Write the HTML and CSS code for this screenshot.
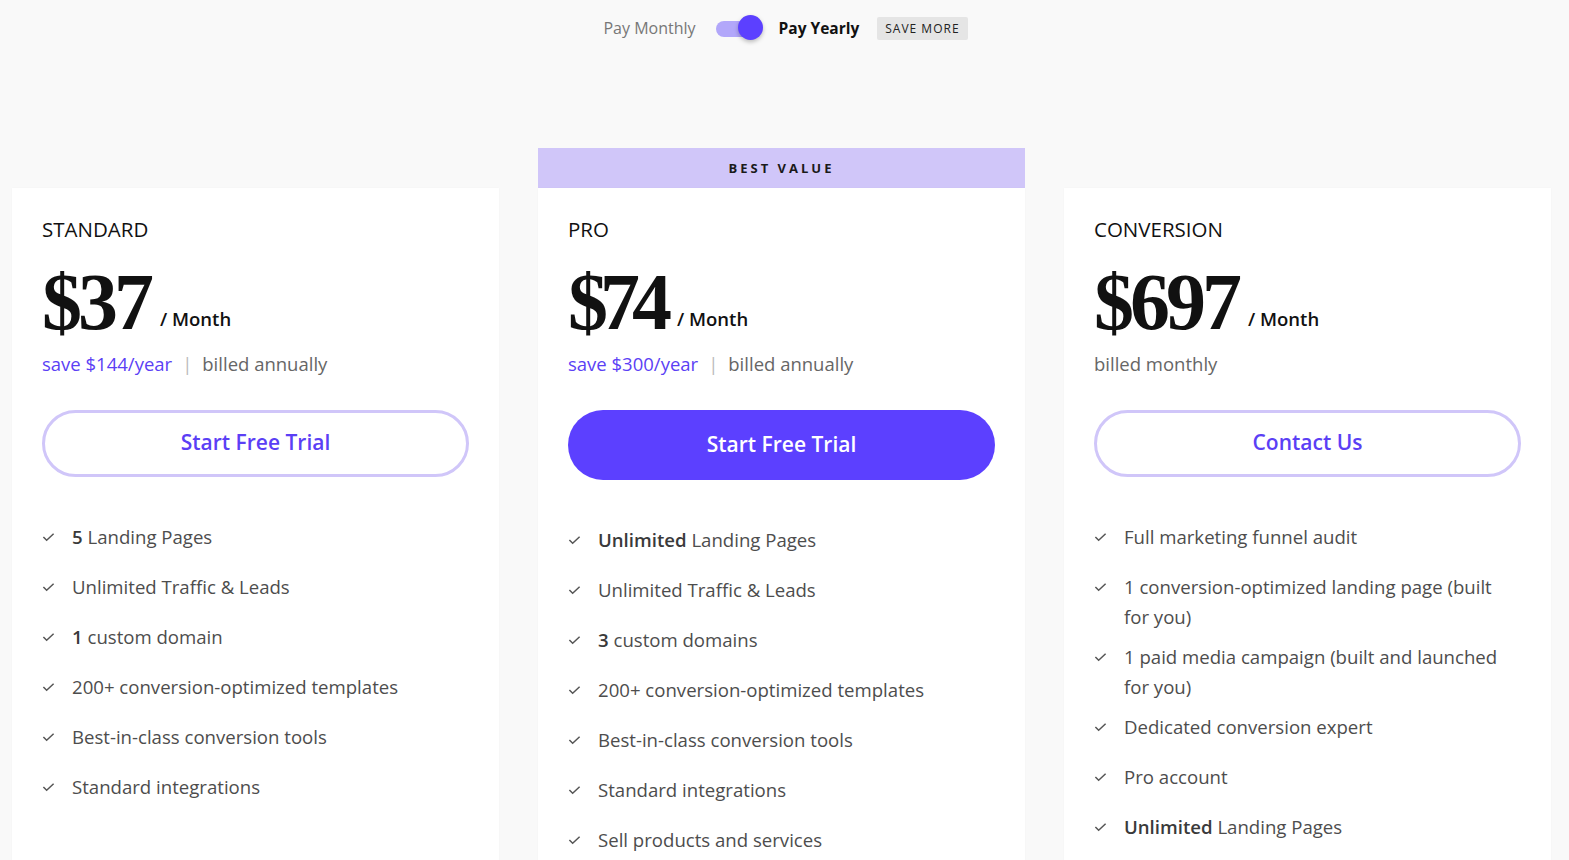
FILE: index.html
```html
<!DOCTYPE html>
<html lang="en">
<head>
<meta charset="utf-8">
<title>Pricing</title>
<link rel="stylesheet" href="styles.css">
</head>
<body>
<div class="billing">
  <span class="billing-opt">Pay Monthly</span>
  <span class="switch"><span class="switch-track"></span><span class="switch-knob"></span></span>
  <span class="billing-opt active">Pay Yearly</span>
  <span class="badge">SAVE MORE</span>
</div>

<div class="plans">
  <div class="plan">
    <div class="card">
      <h2 class="plan-name">STANDARD</h2>
      <div class="price-row"><span class="price">$37</span><span class="per">/ Month</span></div>
      <p class="billing-note"><span class="save">save $144/year</span><span class="sep">|</span><span>billed annually</span></p>
      <a class="btn btn-outline">Start Free Trial</a>
      <ul class="features">
        <li><svg class="check" viewBox="0 0 14 10"><path d="M1.5 5 L5 8.5 L12.5 1.5"/></svg><span><b>5</b> Landing Pages</span></li>
        <li><svg class="check" viewBox="0 0 14 10"><path d="M1.5 5 L5 8.5 L12.5 1.5"/></svg><span>Unlimited Traffic &amp; Leads</span></li>
        <li><svg class="check" viewBox="0 0 14 10"><path d="M1.5 5 L5 8.5 L12.5 1.5"/></svg><span><b>1</b> custom domain</span></li>
        <li><svg class="check" viewBox="0 0 14 10"><path d="M1.5 5 L5 8.5 L12.5 1.5"/></svg><span>200+ conversion-optimized templates</span></li>
        <li><svg class="check" viewBox="0 0 14 10"><path d="M1.5 5 L5 8.5 L12.5 1.5"/></svg><span>Best-in-class conversion tools</span></li>
        <li><svg class="check" viewBox="0 0 14 10"><path d="M1.5 5 L5 8.5 L12.5 1.5"/></svg><span>Standard integrations</span></li>
      </ul>
    </div>
  </div>

  <div class="plan featured">
    <div class="banner">BEST VALUE</div>
    <div class="card">
      <h2 class="plan-name">PRO</h2>
      <div class="price-row"><span class="price tight">$74</span><span class="per">/ Month</span></div>
      <p class="billing-note"><span class="save">save $300/year</span><span class="sep">|</span><span>billed annually</span></p>
      <a class="btn btn-solid">Start Free Trial</a>
      <ul class="features">
        <li><svg class="check" viewBox="0 0 14 10"><path d="M1.5 5 L5 8.5 L12.5 1.5"/></svg><span><b>Unlimited</b> Landing Pages</span></li>
        <li><svg class="check" viewBox="0 0 14 10"><path d="M1.5 5 L5 8.5 L12.5 1.5"/></svg><span>Unlimited Traffic &amp; Leads</span></li>
        <li><svg class="check" viewBox="0 0 14 10"><path d="M1.5 5 L5 8.5 L12.5 1.5"/></svg><span><b>3</b> custom domains</span></li>
        <li><svg class="check" viewBox="0 0 14 10"><path d="M1.5 5 L5 8.5 L12.5 1.5"/></svg><span>200+ conversion-optimized templates</span></li>
        <li><svg class="check" viewBox="0 0 14 10"><path d="M1.5 5 L5 8.5 L12.5 1.5"/></svg><span>Best-in-class conversion tools</span></li>
        <li><svg class="check" viewBox="0 0 14 10"><path d="M1.5 5 L5 8.5 L12.5 1.5"/></svg><span>Standard integrations</span></li>
        <li><svg class="check" viewBox="0 0 14 10"><path d="M1.5 5 L5 8.5 L12.5 1.5"/></svg><span>Sell products and services</span></li>
      </ul>
    </div>
  </div>

  <div class="plan">
    <div class="card">
      <h2 class="plan-name">CONVERSION</h2>
      <div class="price-row"><span class="price">$697</span><span class="per">/ Month</span></div>
      <p class="billing-note"><span>billed monthly</span></p>
      <a class="btn btn-outline">Contact Us</a>
      <ul class="features">
        <li><svg class="check" viewBox="0 0 14 10"><path d="M1.5 5 L5 8.5 L12.5 1.5"/></svg><span>Full marketing funnel audit</span></li>
        <li><svg class="check" viewBox="0 0 14 10"><path d="M1.5 5 L5 8.5 L12.5 1.5"/></svg><span>1 conversion-optimized landing page (built for you)</span></li>
        <li><svg class="check" viewBox="0 0 14 10"><path d="M1.5 5 L5 8.5 L12.5 1.5"/></svg><span>1 paid media campaign (built and launched for you)</span></li>
        <li><svg class="check" viewBox="0 0 14 10"><path d="M1.5 5 L5 8.5 L12.5 1.5"/></svg><span>Dedicated conversion expert</span></li>
        <li><svg class="check" viewBox="0 0 14 10"><path d="M1.5 5 L5 8.5 L12.5 1.5"/></svg><span>Pro account</span></li>
        <li><svg class="check" viewBox="0 0 14 10"><path d="M1.5 5 L5 8.5 L12.5 1.5"/></svg><span><b>Unlimited</b> Landing Pages</span></li>
      </ul>
    </div>
  </div>
</div>
</body>
</html>
```

FILE: styles.css
```css
* { box-sizing: border-box; }
html, body { margin: 0; padding: 0; }
body {
  background: #f9f9f9;
  font-family: "Open Sans", "Lato", sans-serif;
  color: #111;
  overflow: hidden;
}

.billing {
  display: flex;
  align-items: center;
  justify-content: center;
  height: 56px;
  padding-left: 2px;
}
.billing-opt {
  font-size: 16px;
  color: #777;
}
.billing-opt.active {
  color: #111;
  font-weight: 700;
  font-size: 15.5px;
}
.switch {
  position: relative;
  width: 47px;
  height: 26px;
  margin: 0 16px 0 20px;
}
.switch-track {
  position: absolute;
  left: 0;
  top: 6px;
  width: 43px;
  height: 16px;
  border-radius: 8px;
  background: #b2a7fa;
}
.switch-knob {
  position: absolute;
  right: 0;
  top: 0;
  width: 25px;
  height: 25px;
  border-radius: 50%;
  background: #5c40ff;
  box-shadow: 0 2px 4px rgba(0,0,0,0.25);
}
.badge {
  margin-left: 18px;
  background: #e5e5e5;
  color: #222;
  font-size: 12px;
  letter-spacing: 1px;
  padding: 4px 8px;
  border-radius: 2px;
  line-height: 15px;
}

.plans {
  display: grid;
  grid-template-columns: repeat(3, 487px);
  column-gap: 39px;
  padding: 0 12px;
  margin-top: 92px;
  align-items: start;
}
.plan { display: flex; flex-direction: column; }
.plan:not(.featured) { padding-top: 40px; }
.banner {
  height: 40px;
  background: #d0c6f9;
  color: #1a1a1a;
  font-size: 13px;
  font-weight: 700;
  letter-spacing: 3px;
  display: flex;
  align-items: center;
  justify-content: center;
}
.card {
  background: #fff;
  padding: 28px 30px 0 30px;
  min-height: 700px;
  box-shadow: 0 0 2px rgba(0,0,0,0.03);
}
.plan-name {
  margin: 0;
  font-size: 20.5px;
  font-weight: 500;
  line-height: 26px;
  color: #111;
}
.price-row {
  margin-top: 20px;
  height: 84px;
  line-height: 80px;
  white-space: nowrap;
}
.price {
  font-family: "Liberation Serif", "Times New Roman", serif;
  font-weight: 700;
  font-size: 80px;
  letter-spacing: -4px;
  color: #111;
}
.price.tight { letter-spacing: -8px; }
.per {
  font-size: 18.5px;
  font-weight: 600;
  margin-left: 10px;
  color: #111;
  vertical-align: 3px;
}
.price.tight + .per { margin-left: 13px; }
.billing-note {
  margin: 5px 0 0 0;
  font-size: 18.5px;
  line-height: 26px;
  color: #666;
  display: flex;
  align-items: center;
}
.save { color: #5b3ff5; font-weight: 500; }
.sep { color: #bbb; margin: 0 10px; }

.btn {
  display: flex;
  align-items: center;
  justify-content: center;
  margin-top: 33px;
  height: 67px;
  padding-bottom: 3px;
  border-radius: 34px;
  font-size: 21px;
  font-weight: 600;
  text-decoration: none;
}
.btn-outline {
  border: 3px solid #d0c6f9;
  color: #5b3ff5;
}
.btn-solid {
  height: 70px;
  background: #5c40ff;
  color: #fff;
  border-radius: 35px;
}

.features {
  list-style: none;
  margin: 45px 0 0 0;
  padding: 0;
}
.features li {
  display: flex;
  align-items: flex-start;
  min-height: 40px;
  margin-bottom: 10px;
  font-size: 18.6px;
  line-height: 30px;
  color: #4d4d4d;
}
.features li b { font-weight: 600; color: #3a3a3a; }
.check {
  flex: none;
  width: 13px;
  height: 10px;
  margin-top: 10px;
  margin-right: 17px;
  fill: none;
  stroke: #555;
  stroke-width: 1.6;
}
```
